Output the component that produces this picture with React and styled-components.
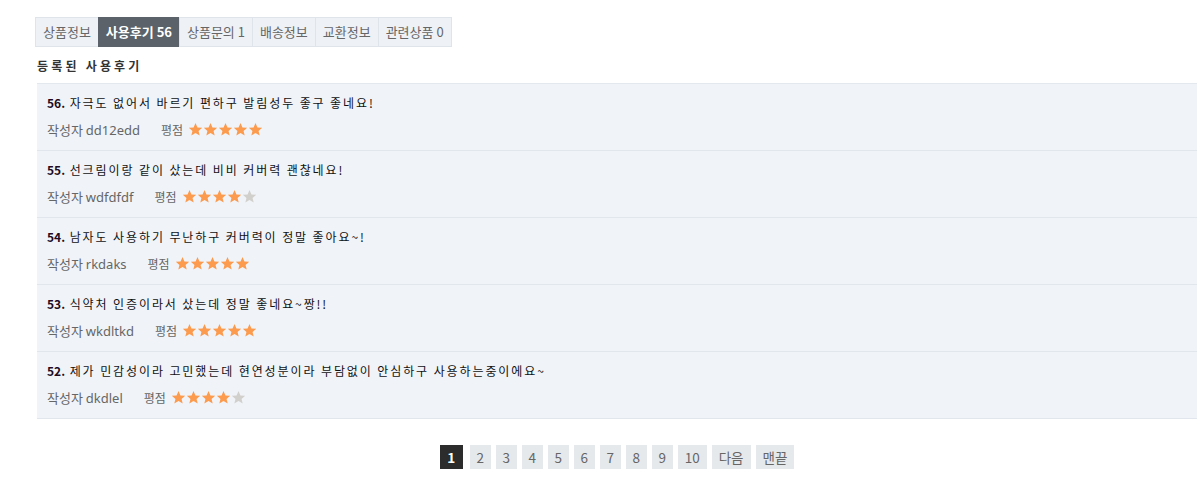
import React from 'react';
import styled, { createGlobalStyle } from 'styled-components';

const GlobalStyle = createGlobalStyle`
  body {
    margin: 0;
    background: #ffffff;
    font-family: "Noto Sans CJK KR", "Noto Sans", sans-serif;
  }
`;

const Page = styled.div`
  padding: 17px 6px 0 37px;
  width: 1160px;
`;

const TabBar = styled.ul`
  display: flex;
  list-style: none;
  margin: 0 0 0 -1px;
  padding: 0;
`;

const Tab = styled.li`
  height: 28px;
  line-height: 28px;
  padding: 0 7px;
  font-size: 13px;
  color: ${props => (props.active ? '#ffffff' : '#666666')};
  font-weight: ${props => (props.active ? 700 : 400)};
  background: ${props => (props.active ? '#5b6269' : '#eef2f7')};
  border: 1px solid ${props => (props.active ? '#5b6269' : '#dfe4ea')};
  margin-left: -1px;
`;

const Heading = styled.h3`
  margin: 10px 0 9px;
  font-size: 12px;
  font-weight: 700;
  color: #333333;
  letter-spacing: 3.2px;
`;

const List = styled.ul`
  list-style: none;
  margin: 0;
  padding: 0;
  border-top: 1px solid #e3e8ee;
`;

const Row = styled.li`
  height: 67px;
  background: #f0f4f9;
  border-bottom: 1px solid #e1e6ec;
  padding: 10px 0 0 10px;
  box-sizing: border-box;
`;

const Title = styled.p`
  margin: 0;
  font-size: 12px;
  line-height: 17px;
  color: #111111;
  letter-spacing: 1.9px;

  b {
    color: #220a22;
    font-weight: 700;
    letter-spacing: 0;
  }
`;

const Meta = styled.div`
  display: flex;
  align-items: center;
  margin-top: 9px;
  font-size: 13px;
  color: #666666;
`;

const Writer = styled.span`
  margin-right: 21px;

  span {
    font-family: "Noto Sans", sans-serif;
    font-size: 13px;
  }
`;

const Label = styled.span`
  font-size: 12px;
  margin-right: 5px;
`;

const Stars = styled.span`
  display: flex;
`;

const Star = ({ on }) => (
  <svg width="15" height="15" viewBox="0 0 24 24">
    <path
      d="M12 1.5l3.1 7.1 7.6.6-5.8 5 1.8 7.5L12 17.7l-6.7 4 1.8-7.5-5.8-5 7.6-.6z"
      fill={on ? '#fc9a4d' : '#d2d0cc'}
    />
  </svg>
);

const Pager = styled.div`
  display: flex;
  justify-content: center;
  gap: 5px;
  margin-top: 26px;
`;

const PageBox = styled.span`
  min-width: ${props => (props.active ? '23px' : '21px')};
  height: 24px;
  line-height: 24px;
  padding: 0 ${props => (props.wide ? '7px' : '0')};
  text-align: center;
  font-size: 13.5px;
  box-sizing: border-box;
  background: ${props => (props.active ? '#2c2c2c' : '#e6e9ec')};
  color: ${props => (props.active ? '#ffffff' : '#666666')};
  font-weight: ${props => (props.active ? 700 : 400)};
  margin-right: ${props => (props.active ? '2px' : '0')};
`;

const tabs = [
  { label: '상품정보' },
  { label: '사용후기 56', active: true },
  { label: '상품문의 1' },
  { label: '배송정보' },
  { label: '교환정보' },
  { label: '관련상품 0' },
];

const reviews = [
  { no: 56, text: '자극도 없어서 바르기 편하구 발림성두 좋구 좋네요!', writer: 'dd12edd', score: 5 },
  { no: 55, text: '선크림이랑 같이 샀는데 비비 커버력 괜찮네요!', writer: 'wdfdfdf', score: 4 },
  { no: 54, text: '남자도 사용하기 무난하구 커버력이 정말 좋아요~!', writer: 'rkdaks', score: 5 },
  { no: 53, text: '식약처 인증이라서 샀는데 정말 좋네요~짱!!', writer: 'wkdltkd', score: 5 },
  { no: 52, text: '제가 민감성이라 고민했는데 현연성분이라 부담없이 안심하구 사용하는중이에요~', writer: 'dkdlel', score: 4 },
];

const pages = ['1', '2', '3', '4', '5', '6', '7', '8', '9', '10', '다음', '맨끝'];

export default function App() {
  return (
    <Page>
      <GlobalStyle />
      <TabBar>
        {tabs.map(t => (
          <Tab key={t.label} active={t.active}>{t.label}</Tab>
        ))}
      </TabBar>
      <Heading>등록된 사용후기</Heading>
      <List>
        {reviews.map(r => (
          <Row key={r.no}>
            <Title><b>{r.no}.</b> {r.text}</Title>
            <Meta>
              <Writer>작성자 <span>{r.writer}</span></Writer>
              <Label>평점</Label>
              <Stars>
                {[0, 1, 2, 3, 4].map(i => (
                  <Star key={i} on={i < r.score} />
                ))}
              </Stars>
            </Meta>
          </Row>
        ))}
      </List>
      <Pager>
        {pages.map((p, i) => (
          <PageBox key={p} active={i === 0} wide={p.length > 1}>{p}</PageBox>
        ))}
      </Pager>
    </Page>
  );
}
